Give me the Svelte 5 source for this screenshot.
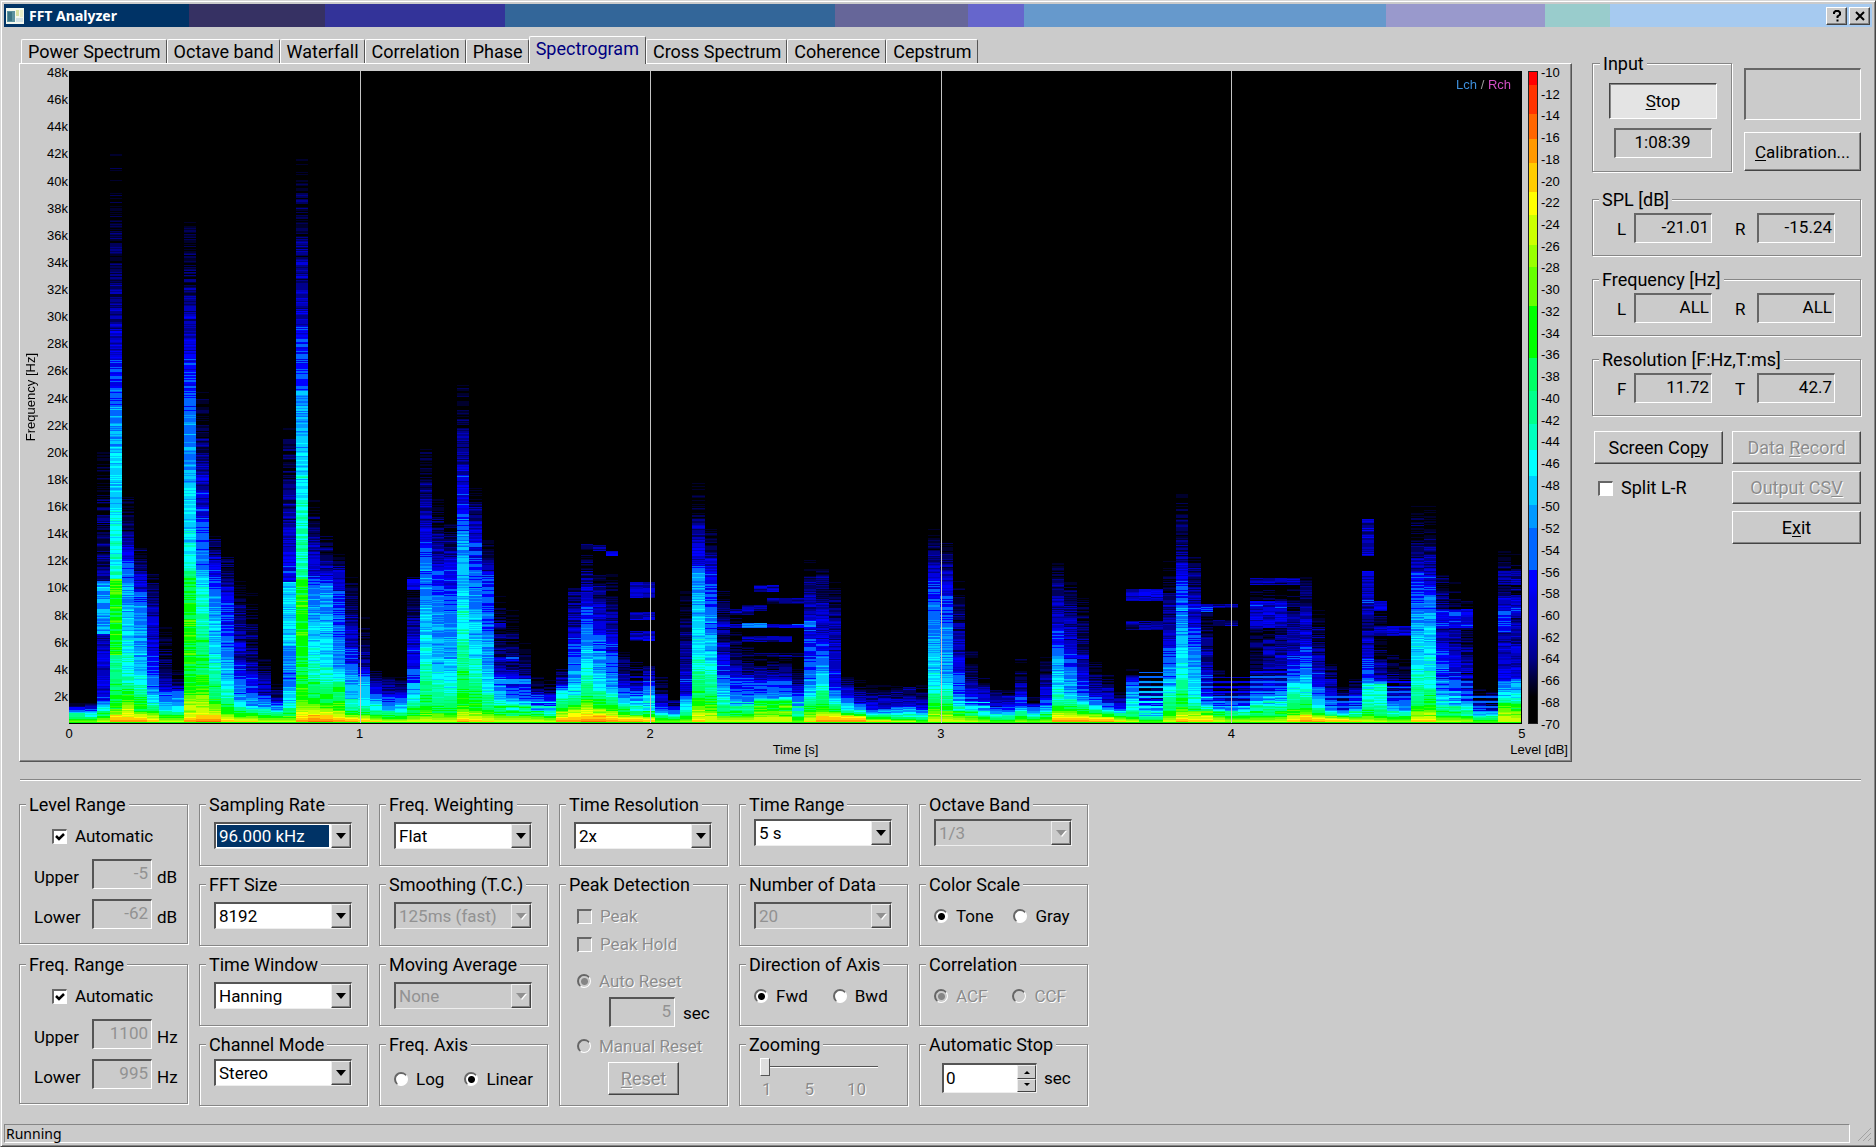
<script lang="ts">
  import { onMount } from 'svelte';

  const tabs = ['Power Spectrum', 'Octave band', 'Waterfall', 'Correlation', 'Phase', 'Spectrogram', 'Cross Spectrum', 'Coherence', 'Cepstrum'];
  const freqTicks = Array.from({ length: 24 }, (_, i) => `${48 - i * 2}k`);
  const timeTicks = [0, 1, 2, 3, 4, 5];
  const levelTicks = Array.from({ length: 31 }, (_, i) => -10 - i * 2);

  let activeTab = $state('Spectrogram');
  let axis = $state('linear');
  let direction = $state('fwd');
  let scale = $state('tone');
  let autoLevel = $state(true);
  let autoFreq = $state(true);
  let split = $state(false);
  let zoom = $state(1);
  let stopAfter = $state(0);
  let canvas: HTMLCanvasElement;

  // lower bound of each band in dB, and its colour
  const tone: [number, number, number, number][] = [
    [-11, 255, 0, 0], [-14, 255, 51, 0], [-16, 255, 102, 0], [-18, 255, 153, 0], [-21, 255, 204, 0],
    [-23, 255, 255, 0], [-26, 204, 255, 0], [-28, 153, 255, 0], [-31, 102, 255, 0], [-32, 51, 255, 0],
    [-36, 0, 255, 0], [-39, 0, 255, 102], [-42, 0, 255, 140], [-44, 0, 255, 190], [-47, 0, 255, 255],
    [-50, 0, 204, 255], [-52, 0, 153, 255], [-56, 0, 102, 255], [-58, 0, 0, 255], [-60, 0, 0, 225],
    [-62, 0, 0, 190], [-64, 0, 0, 140], [-66, 0, 0, 90], [-68, 0, 0, 45], [-99, 0, 0, 0]
  ];

  // one frame per line: height in kHz at which the level passes each of these marks
  const marks = [-70, -65, -58.5, -52.5, -47.5, -41, -34, -23];
  const frames = `
1.5 1.3 1.1 .9 .8 .5 .3 0
1.5 1.3 1.1 .9 .8 .5 .3 0
20 14 1.8 1.4 1.2 .9 .5 .1
42 32 27 22 19 5 1.2 .6
17 14.5 12 10.3 6.5 3 2.2 .6
13 12 10 8.5 3.6 2.2 1 .5
11 10 5 2.6 1.8 1.2 .8 .3
8 4 2.5 1.8 1.2 .8 .5 .1
4 3 2.5 1.8 1.2 .8 .5 .1
38 32 27 21.5 14 11 3 .5
25 20 16 11.5 10.5 7 3 .7
14 13 11.5 9.5 5.5 3 1.5 .7
12.5 11.5 9 5.5 2.8 1.8 1 .3
11 8 4 2 1.5 1 .6 .2
10 5 3 1.6 1.2 .9 .6 .2
5 3.5 2 1.5 1.1 .8 .5 .1
3 2 1.5 1.2 .9 .7 .5 .1
22 18 11 3 1.5 1 .5 .1
42 36 28.5 24 19.5 11 2.5 .5
16.5 14 11.5 9.5 6 3.5 1.7 .9
14 12.7 10.7 10 5 3 1.5 .7
12.5 11.5 10 5.5 3.2 3 1.2 .5
11 9 5 3.2 2 1.2 .7 .4
8 5 3.6 3.4 1.9 1.1 .7 .3
4 3.4 2.5 1.8 1.4 1 .5 .2
3.5 3 2 1.5 1 .8 .4 .1
3.5 3 2 1.5 1 .8 .4 .1
11 8.5 5 2.5 2 1.2 .6 .1
21 17 13.5 11 6 3 1 .1
17 14 11.5 8 3.5 2 .8 .1
15 13.5 11 7 3.5 2 .8 .1
25 21 17 13.5 9.5 5 1.3 .4
17.5 16 13.5 10 6 3 1.4 .3
13.5 12 10.5 6.5 3 1.7 .9 .2
9.5 5 3.5 2.5 1.7 1.5 .8 .1
8.5 4.5 3.2 2 1.5 1.4 .7 .1
6.5 4 3 1.7 1.5 1.3 .7 .1
3.6 2.6 2 1.4 1.1 .9 .6 .1
3.2 2.4 1.9 1.3 1.1 .8 .5 .1
4 3.5 2.8 2.6 2.4 1.7 1 .5
10.5 9.5 6 3.7 2.5 1.8 1.2 .6
13 11 9 6 5.2 2.5 1.6 .7
11 10 7 5.2 3 2 1.3 .7
11 9 5.8 3 2.3 1.7 1.1 .5
5.5 4 2.7 1.8 1.5 1.2 .8 .4
4.5 3.5 2.6 2.3 1.8 1.1 .7 .4
4.5 4 3.5 3 2 1 .7 .3
3.6 2.5 1.5 1 .8 .6 .3 0
2 1.5 1 .7 .6 .5 .3 0
10.5 6 2.2 1.9 1 .8 .4 0
18 15 12 10.8 6 3.3 1.8 .3
14.5 13 11 7 4.8 2.8 1.5 .1
10.5 8 4 3 2 1.6 .8 .1
8 5 3.1 1.7 1.5 1.4 .8 .1
6 4 3.1 1.7 1.5 1.4 .8 .1
5 4 3 2 1.8 1.7 1.5 .1
5 4 3 2 1.8 1.7 1.5 .1
5 4 3 2 1.8 1.7 1.5 .1
4 3.2 2.4 1.6 1.2 .8 .3 0
12 10.5 7 3 2.2 1.5 1 .2
11.5 10.5 6 4.5 3.5 2.2 1 .6
10.5 9 3 2 1.6 1.2 .9 .6
3.8 3 2.2 1.5 1.1 .9 .7 .5
3.2 2.5 1.4 1.2 1 .8 .6 .5
3 2.3 1.1 .9 .7 .6 .4 .2
3 2.3 1.1 .9 .7 .6 .4 .2
3.1 2.4 1.3 1.1 .8 .5 .3 .1
3.1 2.4 1.3 1.1 .8 .5 .3 .1
2.8 2.2 1.3 1 .7 .4 .2 0
14.5 12.5 10.5 7 3.8 2 1 .1
13.5 12 9.5 6 3 1.7 1 .1
10.5 8 4 2.2 1.5 1.2 .8 .1
6 3.5 1.7 1.5 1.3 1.1 .6 0
3.5 2.8 1.5 1.2 1 .8 .4 0
2.8 2.2 1.3 .9 .7 .5 .2 0
2.6 2.1 1.3 .9 .7 .4 .2 0
5 3.4 2 1.2 1 .7 .4 0
2 1.5 1.2 .9 .7 .5 .3 0
5 4 2 1.3 1 .7 .4 0
12 10.5 6.5 5 3 1.7 1.1 .5
10.7 9 5 3 2 1.6 .9 .5
9.5 6.5 3 1.8 1.5 1.2 .9 .5
4.5 3 2 1.4 1.2 1 .8 .4
4 2.7 1.6 1.2 1 .8 .6 .4
2.5 2 1.2 1 .8 .7 .5 .2
4 3.5 3 2.5 1.6 .8 .4 .1
3.8 3 2 1.5 1 .4 .2 0
3.8 3 2 1.5 1 .4 .2 0
12 9.5 5.5 3.5 2.5 1.7 .8 .1
17 13.5 11 8.5 5 2.5 1.2 .4
12.5 11 7 5 2.5 1.3 1 .3
8.8 6 3 2 1.4 1.2 1 .3
4 3 2 1.4 1.1 .9 .7 .1
3.5 2.8 1.8 1.3 1 .8 .5 0
3.6 2.9 2 1.4 1.2 .8 .5 0
10.5 4 3 2 1.6 1.3 .6 0
10.5 5 3.2 2.2 1.7 1.3 .6 0
10.5 6 3.4 2.4 1.8 1.4 .7 0
10 8 4 3.2 2.6 1.7 1 .3
11.3 10 6 4 3 1.7 1 .6
8.7 6 3.3 2.2 1.6 1 .7 .4
4.5 3.4 2.3 1.3 1 .8 .6 .3
3 2.4 1.5 1 .8 .7 .5 .3
3.5 2.8 2 1.2 1 .8 .5 .2
11 8 4.5 3 2.4 1.2 .6 .1
9 4.5 3.2 3 2.4 1.2 .5 .1
5 3.5 2.3 1.5 1.2 .8 .4 0
5 3.2 2.3 1.5 1.2 .8 .4 0
16 13 10.7 8.5 5 2 1.1 .3
16 13 10.5 8.5 5.5 2.5 1.2 .3
11.5 9.5 5 3.2 2.2 1.3 .6 0
10.5 8 3.7 2.6 1.7 1.2 .6 0
9 6 2.8 2 1.4 1 .5 0
2.6 2 1.2 .9 .7 .5 .2 0
2.6 2 1.2 .9 .7 .5 .2 0
13 10 3.2 3 2.2 1.6 1.4 .1
12.5 9.5 3.4 3 2.2 1.6 1.3 .1`
    .trim().split('\n').map((line) => line.split(' ').map(Number));

  // resonances that stand out of the decay: first frame, last frame, low kHz, high kHz, dB
  const bands = [
    [2, 2, 6.6, 10.5, -51], [3, 3, 5, 10.6, -34], [9, 9, 4.8, 10.7, -34], [17, 17, 5.7, 10.4, -48], [18, 18, 5, 10.7, -34],
    [27, 27, 9.8, 10.6, -58], [34, 36, 2.9, 3.3, -52], [33, 35, 4.6, 4.9, -58], [34, 35, 6.2, 6.6, -63], [34, 34, 7, 7.4, -63],
    [42, 42, 12.7, 13.1, -62], [43, 43, 12.3, 12.7, -59], [41, 41, 12.8, 13.2, -65],
    [45, 46, 9.2, 10.4, -61], [45, 46, 7.6, 8.2, -60], [45, 46, 6.1, 6.8, -60],
    [53, 54, 8, 8.4, -64], [54, 55, 8.3, 8.7, -63], [56, 58, 8.8, 9.2, -62], [55, 56, 9.7, 10.2, -61],
    [52, 58, 7, 7.3, -60], [54, 55, 7, 7.4, -55], [59, 59, 7.1, 7.5, -54], [54, 57, 6, 6.4, -62], [53, 58, 4.9, 5.2, -65],
    [52, 57, 2.8, 3.1, -55], [85, 87, 9, 9.9, -61], [86, 87, 9.4, 9.8, -58], [85, 87, 6.9, 7.5, -62], [90, 91, 8.2, 8.8, -57],
    [91, 93, 7.2, 7.6, -64], [92, 93, 8.5, 8.8, -63], [95, 97, 7, 9, -60], [95, 98, 10.2, 10.7, -63], [96, 98, 5, 6, -62],
    [104, 104, 12.3, 15, -61], [104, 104, 8, 11.2, -60], [105, 105, 8.3, 9, -60], [105, 107, 6.4, 7.2, -61],
    [104, 105, 2, 2.9, -43], [115, 115, 6.7, 8.3, -56], [115, 116, 7.8, 9.2, -60], [115, 116, 10.2, 11.2, -62], [110, 112, 7, 8.4, -59]
  ];

  // frames with a clear comb of harmonics, up to the given kHz
  const combs = [[34, 38, 1.6, -40], [45, 46, 3.6, -50], [52, 58, 1.6, -38], [71, 73, 1.6, -42], [86, 87, 3.8, -42], [91, 94, 3.4, -50], [95, 97, 4, -45], [101, 103, 2, -50], [106, 107, 3.2, -48], [110, 112, 3.8, -46], [113, 114, 2, -50]];

  function hash(a: number, b: number) {
    const n = Math.sin(a * 127.1 + b * 311.7) * 43758.5453;
    return n - Math.floor(n);
  }

  function levelAt(frame: number, khz: number, row: number) {
    const heights = frames[frame];
    let level = -80;
    if (khz < heights[0]) {
      let i = 0;
      while (i < 7 && khz < heights[i + 1]) i++;
      const top = heights[i];
      const low = i < 7 ? heights[i + 1] : 0;
      const next = i < 7 ? marks[i + 1] : -14;
      level = marks[i] + (next - marks[i]) * ((top - khz) / Math.max(0.01, top - low));
    }
    for (const [from, to, low, high, db] of bands) {
      if (frame >= from && frame <= to && khz >= low && khz <= high) level = Math.max(level, db);
    }
    if (khz > 0.5) {
      level += (hash(frame, row) - 0.5) * 6 + (hash(frame + 500, row >> 2) - 0.5) * 4;
      for (const [from, to, top, db] of combs) {
        if (frame >= from && frame <= to && khz < top) level = row % 5 < 2 ? Math.max(level, db - khz * 3) : level - 4;
      }
    }
    if (khz < 0.12) level = Math.min(level, -33);
    return level;
  }

  function draw() {
    const context = canvas.getContext('2d');
    if (!context) return;
    const { width, height } = canvas;
    const image = context.createImageData(width, height);
    const frameWidth = width / 117.2;
    for (let y = 0; y < height; y++) {
      const khz = ((height - 1 - y) / height) * 48;
      for (let x = 0; x < width; x++) {
        const frame = Math.min(frames.length - 1, Math.max(0, Math.floor((x - 3) / frameWidth)));
        const level = levelAt(frame, khz, y);
        const [, r, g, b] = tone.find((step) => level >= step[0]) ?? tone[tone.length - 1];
        const at = (y * width + x) * 4;
        image.data[at] = r;
        image.data[at + 1] = g;
        image.data[at + 2] = b;
        image.data[at + 3] = 255;
      }
    }
    context.putImageData(image, 0, 0);
    context.fillStyle = '#c4c4c4';
    for (let second = 1; second < 5; second++) context.fillRect(Math.round((second * width) / 5), 0, 1, height);
    context.fillStyle = '#000';
    context.fillRect(0, height - 1, width, 1);
    context.fillRect(width - 1, 0, 1, height);
  }

  onMount(draw);
</script>

{#snippet combo(name: string, options: string[], disabled = false, selected = false)}
  <div class="combo" class:disabled class:selected>
    <select aria-label={name} {disabled}>
      {#each options as option (option)}<option>{option}</option>{/each}
    </select>
    <span class="arrow" aria-hidden="true">
      <svg width="10" height="6" viewBox="0 0 10 6"><path d="M0 0h10L5 6z" /></svg>
    </span>
  </div>
{/snippet}

{#snippet limits(id: string, unit: string, upper: string, lower: string)}
  <div class="limit">
    <label for="{id}-upper">Upper</label><input id="{id}-upper" class="edit" value={upper} disabled /><span>{unit}</span>
  </div>
  <div class="limit">
    <label for="{id}-lower">Lower</label><input id="{id}-lower" class="edit" value={lower} disabled /><span>{unit}</span>
  </div>
{/snippet}

{#snippet readout(title: string, left: string, leftValue: string, right: string, rightValue: string)}
  <fieldset class="readout">
    <legend>{title}</legend>
    <div class="readout-values">
      <span>{left}</span><output>{leftValue}</output>
      <span class="second">{right}</span><output>{rightValue}</output>
    </div>
  </fieldset>
{/snippet}

<div class="window">
  <header class="titlebar">
    <svg class="app-icon" width="18" height="16" viewBox="0 0 18 16" aria-hidden="true">
      <rect width="18" height="16" fill="#f4f8ee" />
      <rect x="1" y="3" width="8" height="11" fill="#5d93a0" />
      <rect x="2" y="4" width="4" height="9" fill="#3b7484" />
      <rect x="10" y="2" width="3" height="6" fill="#d9e2a4" />
      <rect x="14" y="2" width="3" height="7" fill="#e8edc8" />
      <rect x="10" y="10" width="7" height="4" fill="#cfe0e4" />
    </svg>
    <h1>FFT Analyzer</h1>
    <button class="caption" aria-label="Help">
      <svg width="12" height="12" viewBox="0 0 12 12"><path d="M3 4V2.500L4.500 1h3L9 2.500v2L6.500 6.500V8M6.500 9.500V11.500" fill="none" stroke="#000" stroke-width="2" /></svg>
    </button>
    <button class="caption" aria-label="Close">
      <svg width="12" height="12" viewBox="0 0 12 12"><path d="M2 2l8 8M10 2l-8 8" stroke="#000" stroke-width="2" /></svg>
    </button>
  </header>

  <div class="workspace">
    <main>
      <div class="tabs" role="tablist">
        {#each tabs as tab (tab)}
          <button role="tab" class:active={activeTab === tab} aria-selected={activeTab === tab} onclick={() => (activeTab = tab)}>{tab}</button>
        {/each}
      </div>
      <section class="chart">
        <div class="axis-name"><span>Frequency [Hz]</span></div>
        <div class="freq-ticks">
          {#each freqTicks as tick (tick)}<span>{tick}</span>{/each}
        </div>
        <div class="plot">
          <canvas bind:this={canvas} width="1453" height="653"></canvas>
          <p class="channels"><span class="lch">Lch</span> / <span class="rch">Rch</span></p>
        </div>
        <div class="scale"></div>
        <div class="level-ticks">
          {#each levelTicks as tick (tick)}<span>{tick}</span>{/each}
        </div>
        <div class="time-ticks">
          {#each timeTicks as tick (tick)}<span>{tick}</span>{/each}
        </div>
        <p class="time-name">Time [s]</p>
        <p class="level-name">Level [dB]</p>
      </section>
    </main>

    <aside>
      <div class="input-row">
        <fieldset class="input-group">
          <legend>Input</legend>
          <button class="push stop"><span><u>S</u>top</span></button>
          <output class="clock">1:08:39</output>
        </fieldset>
        <div class="meter-column">
          <div class="meter"></div>
          <button class="push calibration"><span><u>C</u>alibration...</span></button>
        </div>
      </div>
      {@render readout('SPL [dB]', 'L', '-21.01', 'R', '-15.24')}
      {@render readout('Frequency [Hz]', 'L', 'ALL', 'R', 'ALL')}
      {@render readout('Resolution [F:Hz,T:ms]', 'F', '11.72', 'T', '42.7')}
      <div class="actions">
        <button class="push"><span>Screen Co<u>p</u>y</span></button>
        <button class="push" disabled><span>Data <u>R</u>ecord</span></button>
        <label class="choice"><input type="checkbox" bind:checked={split} />Split L-R</label>
        <button class="push" disabled><span>Output CS<u>V</u></span></button>
        <button class="push exit"><span>E<u>x</u>it</span></button>
      </div>
    </aside>
  </div>

  <hr />

  <section class="controls">
    <fieldset class="range">
      <legend>Level Range</legend>
      <label class="choice auto"><input type="checkbox" bind:checked={autoLevel} />Automatic</label>
      {@render limits('level', 'dB', '-5', '-62')}
    </fieldset>
    <fieldset>
      <legend>Sampling Rate</legend>
      {@render combo('Sampling Rate', ['96.000 kHz', '48.000 kHz', '44.100 kHz'], false, true)}
    </fieldset>
    <fieldset>
      <legend>Freq. Weighting</legend>
      {@render combo('Freq. Weighting', ['Flat', 'A', 'C'])}
    </fieldset>
    <fieldset>
      <legend>Time Resolution</legend>
      {@render combo('Time Resolution', ['2x', '1x', '4x'])}
    </fieldset>
    <fieldset class="high">
      <legend>Time Range</legend>
      {@render combo('Time Range', ['5 s', '10 s', '20 s'])}
    </fieldset>
    <fieldset class="high">
      <legend>Octave Band</legend>
      {@render combo('Octave Band', ['1/3'], true)}
    </fieldset>

    <fieldset>
      <legend>FFT Size</legend>
      {@render combo('FFT Size', ['8192', '4096', '2048'])}
    </fieldset>
    <fieldset>
      <legend>Smoothing (T.C.)</legend>
      {@render combo('Smoothing', ['125ms (fast)'], true)}
    </fieldset>
    <fieldset class="peak">
      <legend>Peak Detection</legend>
      <label class="choice disabled"><input type="checkbox" disabled />Peak</label>
      <label class="choice disabled"><input type="checkbox" disabled />Peak Hold</label>
      <label class="choice disabled reset-mode"><input type="radio" name="reset" checked disabled />Auto Reset</label>
      <div class="limit">
        <input class="edit" aria-label="Auto reset time" value="5" disabled /><span>sec</span>
      </div>
      <label class="choice disabled manual"><input type="radio" name="reset" disabled />Manual Reset</label>
      <button class="push" disabled><span><u>R</u>eset</span></button>
    </fieldset>
    <fieldset>
      <legend>Number of Data</legend>
      {@render combo('Number of Data', ['20'], true)}
    </fieldset>
    <fieldset>
      <legend>Color Scale</legend>
      <div class="choices">
        <label class="choice"><input type="radio" value="tone" bind:group={scale} />Tone</label>
        <label class="choice"><input type="radio" value="gray" bind:group={scale} />Gray</label>
      </div>
    </fieldset>

    <fieldset class="range">
      <legend>Freq. Range</legend>
      <label class="choice auto"><input type="checkbox" bind:checked={autoFreq} />Automatic</label>
      {@render limits('freq', 'Hz', '1100', '995')}
    </fieldset>
    <fieldset>
      <legend>Time Window</legend>
      {@render combo('Time Window', ['Hanning', 'Hamming', 'Rectangular'])}
    </fieldset>
    <fieldset>
      <legend>Moving Average</legend>
      {@render combo('Moving Average', ['None'], true)}
    </fieldset>
    <fieldset>
      <legend>Direction of Axis</legend>
      <div class="choices spaced">
        <label class="choice"><input type="radio" value="fwd" bind:group={direction} />Fwd</label>
        <label class="choice"><input type="radio" value="bwd" bind:group={direction} />Bwd</label>
      </div>
    </fieldset>
    <fieldset>
      <legend>Correlation</legend>
      <div class="choices spaced">
        <label class="choice disabled"><input type="radio" name="correlation" checked disabled />ACF</label>
        <label class="choice disabled"><input type="radio" name="correlation" disabled />CCF</label>
      </div>
    </fieldset>

    <fieldset class="high">
      <legend>Channel Mode</legend>
      {@render combo('Channel Mode', ['Stereo', 'Lch', 'Rch'])}
    </fieldset>
    <fieldset>
      <legend>Freq. Axis</legend>
      <div class="choices low">
        <label class="choice"><input type="radio" value="log" bind:group={axis} />Log</label>
        <label class="choice"><input type="radio" value="linear" bind:group={axis} />Linear</label>
      </div>
    </fieldset>
    <fieldset>
      <legend>Zooming</legend>
      <input class="slider" type="range" min="1" max="10" aria-label="Zooming" bind:value={zoom} />
      <div class="slider-ticks"><span>1</span><span>5</span><span>10</span></div>
    </fieldset>
    <fieldset>
      <legend>Automatic Stop</legend>
      <div class="stop-after">
        <div class="spin">
          <input type="number" min="0" aria-label="Automatic stop time" bind:value={stopAfter} />
          <div class="spin-buttons">
            <button aria-label="Increase" onclick={() => stopAfter++}><svg width="6" height="4" viewBox="0 0 6 4"><path d="M0 4h6L3 1z" /></svg></button>
            <button aria-label="Decrease" onclick={() => (stopAfter = Math.max(0, stopAfter - 1))}><svg width="6" height="4" viewBox="0 0 6 4"><path d="M0 0h6L3 3z" /></svg></button>
          </div>
        </div>
        <span>sec</span>
      </div>
    </fieldset>
  </section>

  <footer><span>Running</span>
    <svg width="16" height="16" viewBox="0 0 16 16" aria-hidden="true"><path d="M15 2L2 15M15 7L7 15M15 12l-3 3" stroke="#a2a2a2" stroke-width="1" /></svg>
  </footer>
</div>

<style>
  :global(body) { margin: 0; background: #cbcbcb; }
  .window {
    box-sizing: border-box; min-height: 100vh; padding: 3px; display: flex; flex-direction: column;
    background: #cbcbcb; color: #000; font: 17px/20px Roboto, "Liberation Sans", sans-serif;
    border: 1px solid; border-color: #d8d8d8 #444 #444 #d8d8d8;
    box-shadow: inset 1px 1px 0 #fff, inset -1px -1px 0 #858585;
  }
  button, input, select { font: inherit; color: inherit; margin: 0; border-radius: 0; box-sizing: border-box; }
  p, h1 { margin: 0; }

  .titlebar {
    height: 23px; display: flex; align-items: center; padding: 0 2px; color: #fff;
    background: linear-gradient(90deg, #036 9.900%, #363163 9.900% 17.200%, #339 17.200% 26.800%, #369 26.800% 44.500%, #669 44.500% 51.600%, #66c 51.600% 54.600%, #69c 54.600% 74%, #99c 74% 82.500%, #9cc 82.500% 86%, #a6caf0 86%);
  }
  h1 { flex: 1; margin-left: 5px; font: bold 14px/20px "Noto Sans", "Open Sans", sans-serif; }
  .caption { width: 21px; height: 18px; padding: 0; margin-left: 2px; display: grid; place-items: center; background: #cbcbcb; border: 1px solid; border-color: #fff #444 #444 #fff; box-shadow: inset -1px -1px 0 #858585; }

  .workspace { display: flex; gap: 20px; padding: 9px 11px 0 15px; }
  main { flex: 1; min-width: 0; }
  .tabs { display: flex; align-items: flex-end; height: 27px; padding-left: 2px; }
  .tabs button { height: 24px; padding: 0 5px 0 6px; background: #cbcbcb; border: 1px solid; border-color: #fff #555 transparent #fff; border-bottom: 0; border-radius: 2px 2px 0 0; font-size: 18px; line-height: 22px; white-space: nowrap; }
  .tabs button.active { position: relative; height: 28px; margin-bottom: -1px; padding: 0 6px 3px; color: #000080; }

  .chart {
    display: grid; grid-template-columns: 17px 30px minmax(0, 1fr) 10px 38px; grid-template-rows: 653px 16px 16px;
    padding: 7px 1px 3px 2px; border: 1px solid; border-color: #fff #555 #555 #fff; box-shadow: inset -1px -1px 0 #858585;
    font: 13px/18px "Liberation Sans", Arial, sans-serif; row-gap: 1px;
  }
  .axis-name { display: flex; align-items: center; justify-content: center; }
  .axis-name span { writing-mode: vertical-rl; transform: rotate(180deg); }
  .freq-ticks { display: flex; flex-direction: column; justify-content: space-between; text-align: right; margin-top: -5px; padding: 0 1px 20px 0; line-height: 14px; }
  .plot { position: relative; height: 653px; }
  canvas { display: block; width: 100%; height: 100%; }
  .channels { position: absolute; right: 11px; top: 5px; color: #999; }
  .lch { color: #3d8edb; }
  .rch { color: #d24fc4; }
  .scale {
    margin-left: 6px; margin-right: -6px; border: 1px solid #222; box-sizing: border-box;
    background: linear-gradient(#f00 2%, #f30 2% 6.500%, #f60 6.500% 10.300%, #f90 10.300% 14%, #fc0 14% 18.500%, #ff0 18.500% 22%, #cf0 22% 26.500%, #9f0 26.500% 30%, #6f0 30% 36%, #0f0 36% 44%, #0f6 44% 49%, #00ff8c 49% 54%, #00ffbe 54% 58%, #0ff 58% 62%, #0cf 62% 66.500%, #09f 66.500% 70%, #06f 70% 76.500%, #00f 76.500% 79%, #0000e1 81% 84%, #00008c 90%, #000040 93%, #000 96%);
  }
  .level-ticks { display: flex; flex-direction: column; justify-content: space-between; padding-left: 9px; margin: -5px 0 -8px 0; line-height: 14px; }
  .time-ticks { grid-column: 3; display: flex; justify-content: space-between; }
  .time-ticks span { width: 0; display: flex; justify-content: center; }
  .time-name { grid-column: 3; grid-row: 3; text-align: center; line-height: 16px; }
  .level-name { grid-column: 3 / 6; grid-row: 3; text-align: right; line-height: 16px; padding-right: 2px; }

  fieldset { min-width: 0; margin: 0; padding: 0 0 0 14px; border: 1px solid #868686; box-shadow: 1px 1px 0 #fff, inset 1px 1px 0 #fff; box-sizing: border-box; }
  legend { margin-left: -8px; padding: 2px 3px 0; background: #cbcbcb; font-size: 18px; line-height: 18px; white-space: nowrap; }

  aside { flex: 0 0 269px; padding-top: 17px; }
  .input-row { display: flex; gap: 12px; height: 119px; }
  .input-group { width: 140px; padding: 0 15px; }
  .input-group .push { display: block; width: 108px; height: 36px; margin: 10px 0 0 1px; background-color: #e4e4e4; border-color: #444 #fff #fff #444; box-shadow: inset 1px 1px 0 #868686; }
  output { display: block; box-sizing: border-box; height: 30px; border: 2px solid; border-color: #666 #fff #fff #666; border-width: 2px 1px 1px 2px; text-align: right; padding: 2px 2px 0 0; }
  .clock { width: 98px; margin: 9px 0 0 6px; text-align: center; }
  .meter-column { flex: 1; padding-top: 15px; }
  .meter { height: 52px; box-sizing: border-box; border: 2px solid; border-color: #666 #fff #fff #666; border-width: 2px 1px 1px 2px; }
  .calibration { width: 100%; height: 39px; margin-top: 12px; }
  .push { padding: 0; background-color: #cbcbcb; border: 1px solid; border-color: #fff #444 #444 #fff; box-shadow: inset -1px -1px 0 #858585; white-space: nowrap; }
  .push:disabled, .disabled { color: #8b8b8b; text-shadow: 1px 1px 0 #fff; }
  u { text-underline-offset: 2px; }

  .readout { height: 67px; margin-top: 17px; }
  .readout + .readout { margin-top: 13px; }
  .readout-values { display: flex; padding: 4px 0 0 10px; }
  .readout-values span { width: 17px; padding-top: 6px; }
  .readout-values .second { width: 22px; margin-left: 23px; }
  .readout-values output { width: 78px; }
  .actions { display: grid; grid-template-columns: 129px 129px; justify-content: space-between; grid-auto-rows: 33px; row-gap: 7px; margin: 15px 0 0 2px; font-size: 18px; }
  .actions .choice { padding: 6px 4px 0; }
  .exit { grid-column: 2; }

  hr { width: auto; margin: 17px 11px 0 16px; height: 0; border: 0; border-top: 1px solid #868686; border-bottom: 1px solid #fff; align-self: stretch; }
  .controls { display: grid; grid-template-columns: repeat(6, 169px); grid-auto-rows: 72px; gap: 8px 11px; margin: 13px 15px 0; }
  .range { grid-column: 1; grid-row: span 2; margin-bottom: 2px; }
  .peak { grid-row: span 3; }
  .combo { position: relative; width: 138px; height: 27px; margin-top: 8px; box-sizing: border-box; border: 2px solid; border-color: #555 #eee #eee #555; border-width: 2px 1px 1px 2px; }
  .high .combo { margin-top: 5px; }
  select { display: block; appearance: none; width: 100%; height: 100%; padding: 0 22px 0 3px; border: 0; outline: 0; background: #fff; line-height: 22px; }
  .selected select { color: #fff; background: linear-gradient(#036, #036) 1px 1px / calc(100% - 23px) calc(100% - 2px) no-repeat #fff; }
  select:disabled, .edit:disabled { opacity: 1; color: #929292; background: #cbcbcb; text-shadow: none; }
  .arrow { position: absolute; right: 0; top: 0; bottom: 0; width: 20px; box-sizing: border-box; display: grid; place-items: center; pointer-events: none; background: #cbcbcb; border: 1px solid; border-color: #eee #444 #444 #eee; box-shadow: inset -1px -1px 0 #858585; }
  .disabled .arrow svg { fill: #909090; filter: drop-shadow(1px 1px 0 #fff); }

  .choice { display: flex; align-items: center; gap: 8px; height: 22px; width: max-content; white-space: nowrap; }
  .choice input { appearance: none; flex: none; width: 15px; height: 15px; background: #fff; border: 2px solid; border-color: #666 #fff #fff #666; border-width: 2px 1px 1px 2px; }
  .choice input[type='checkbox']:checked { background: #fff url("data:image/svg+xml,%3Csvg xmlns='http://www.w3.org/2000/svg' viewBox='0 0 12 12'%3E%3Cpath d='M2 5l3 3 5-5' fill='none' stroke='black' stroke-width='2.500'/%3E%3C/svg%3E") center / 12px no-repeat; }
  .choice input[type='radio'] { width: 14px; height: 14px; border-radius: 50%; }
  .choice input[type='radio']:checked { background: radial-gradient(circle, #000 3px, #fff 4px); }
  .choice input:disabled { background: #cbcbcb; }
  .choice input[type='radio']:checked:disabled { background: radial-gradient(circle, #858585 3px, #cbcbcb 4px); }
  .choices { display: flex; gap: 20px; margin-top: 11px; }
  .choices.low { margin-top: 14px; }
  .choices.spaced { gap: 25px; }
  .auto { margin: 11px 0 0 18px; }

  .limit { display: flex; align-items: center; height: 30px; margin-top: 10px; }
  .auto + .limit { margin-top: 12px; }
  .limit label { width: 58px; padding-top: 6px; }
  .limit span { padding: 6px 0 0 5px; }
  .edit { width: 60px; height: 30px; padding: 0 3px 4px 0; text-align: right; border: 2px solid; border-color: #555 #fff #fff #555; border-width: 2px 1px 1px 2px; }

  .peak .choice { margin: 11px 0 0 3px; }
  .peak .choice + .choice { margin-top: 6px; }
  .peak .choice.reset-mode { margin-top: 15px; }
  .peak .limit { margin: 5px 0 0 35px; }
  .peak .limit .edit { width: 66px; }
  .peak .limit span { padding: 1px 0 0 8px; }
  .peak .choice.manual { margin-top: 8px; }
  .peak .push { width: 71px; height: 33px; margin: 5px 0 0 34px; font-size: 18px; }

  .slider { appearance: none; display: block; width: 118px; height: 18px; margin: 4px 0 0 6px; background: linear-gradient(#555, #555) 0 8px / 100% 1px no-repeat, linear-gradient(#fff, #fff) 0 9px / 100% 1px no-repeat; }
  .slider::-webkit-slider-thumb { appearance: none; width: 10px; height: 18px; background: #dedede; border: 1px solid; border-color: #fff #555 #555 #fff; box-sizing: border-box; }
  .slider-ticks { display: flex; justify-content: space-between; width: 104px; margin: 3px 0 0 8px; color: #8b8b8b; text-shadow: 1px 1px 0 #fff; }
  .stop-after { display: flex; align-items: center; gap: 7px; margin: 9px 0 0 8px; }
  .spin { display: flex; width: 95px; height: 30px; box-sizing: border-box; background: #fff; border: 2px solid; border-color: #555 #eee #eee #555; border-width: 2px 1px 1px 2px; }
  .spin input { appearance: textfield; flex: 1; min-width: 0; padding: 0 2px 2px; border: 0; outline: 0; background: none; }
  .spin input::-webkit-inner-spin-button { appearance: none; }
  .spin-buttons { width: 19px; display: flex; flex-direction: column; }
  .spin-buttons button { flex: 1; padding: 0; display: grid; place-items: center; background: #cbcbcb; border: 1px solid; border-color: #eee #444 #444 #eee; }

  footer { display: flex; align-items: center; justify-content: space-between; height: 19px; margin-top: auto; font: 14px/18px "Noto Sans", "Open Sans", sans-serif; }
  footer span { flex: 1; height: 19px; margin-right: 6px; padding-left: 1px; border: 1px solid; border-color: #868686 #fff #fff #868686; box-sizing: border-box; line-height: 17px; }
</style>
